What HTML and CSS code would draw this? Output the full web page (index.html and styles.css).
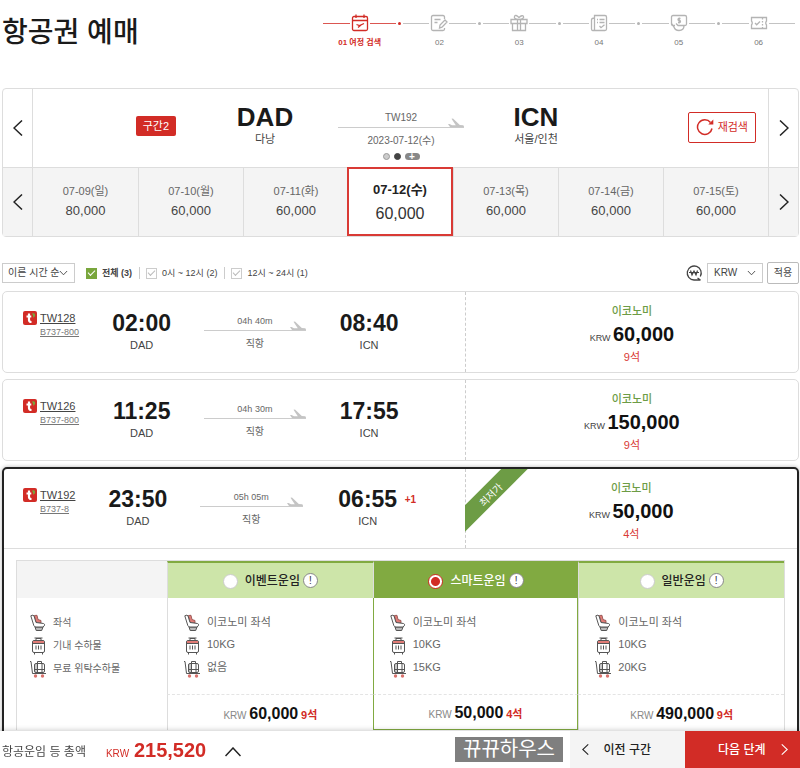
FILE: index.html
```html
<!DOCTYPE html>
<html lang="ko">

<head>
    <meta charset="UTF-8">
    <meta name="viewport" content="width=device-width, initial-scale=1.0">
    <title>항공권 예매</title>
    <link rel="stylesheet" href="styles.css">
</head>

<body>
    <!-- shared icons -->
    <svg class="sprite" aria-hidden="true">
        <symbol id="left" viewBox="0 0 10 16"><path d="M9 .5 1 8l8 7.500" fill="none" stroke="currentColor" stroke-width="1.500"/></symbol>
        <symbol id="right" viewBox="0 0 10 16"><path d="M1 .5 9 8l-8 7.500" fill="none" stroke="currentColor" stroke-width="1.500"/></symbol>
        <symbol id="up" viewBox="0 0 16 10"><path d="M.5 9 8 1l7.500 8" fill="none" stroke="currentColor" stroke-width="1.500"/></symbol>
        <symbol id="down" viewBox="0 0 10 6"><path d="M1 .8 5 5l4-4.200" fill="none" stroke="currentColor"/></symbol>
        <symbol id="plane" viewBox="0 0 16 10"><path d="M0 6h1.500L4 7.200h3.800L3.500.8 5 .6l6.800 6.300 3.200.3q1 .3 1 1.200 0 .8-1 .8H3.200Q2 9.200 1.300 8Z" fill="#c4c4c4"/></symbol>
        <symbol id="tway" viewBox="0 0 14 14">
            <rect width="14" height="14" rx="2" fill="#d22c26"/>
            <path d="M6 2.500v6.500q0 2 2.500 2M3.500 5.500h4.800" fill="none" stroke="#fff" stroke-width="2.200"/>
            <path d="M9 2.500q3.200-.8 3.200 1.500 0 2-2.200 2.800.5-2.200-1-4.300Z" fill="#79a63c"/>
        </symbol>
        <symbol id="seat" viewBox="0 0 16 18">
            <path d="M4.300 1.500 7 1.300 8 5.500l3 1V9L6 8.300Z" fill="#e07b76" stroke="#8a4a47" stroke-width=".8"/>
            <path d="M5 13l1.200 3.500h5.500L13 13Z" fill="#bbb" stroke="#555"/>
            <path d="M.8 1.800Q3.500.3 4 2l2 6.500 7.500 1q1.700.5.8 2.300L13 13H6q-1.700 0-2.200-1.500Z" fill="#fff" stroke="#555"/>
        </symbol>
        <symbol id="cabin" viewBox="0 0 16 18">
            <rect x="2.500" y="3.500" width="12" height="12" rx="1.500" fill="#fff" stroke="#555"/>
            <path d="M3 4h11v2H3Z" fill="#e07b76"/>
            <path d="M6 3.500v-2h5v2M4.500 1h8M2.500 6.500h12M6 8.500v4M8.500 8.500v4M11 8.500v4M4.500 15.500v2M12.500 15.500v2" fill="none" stroke="#555"/>
        </symbol>
        <symbol id="trolley" viewBox="0 0 16 18">
            <path d="M4.500 4h3v9h-3Z" fill="#c8c8c8"/>
            <rect x="4.500" y="3.500" width="10" height="9" rx="1.500" fill="none" stroke="#555"/>
            <path d="M0 1.500h1l1.500 12H16M7.500 3.500v-2h4v2M7.500 3.500v9M12 3.500v9M4.500 9.500h10" fill="none" stroke="#555"/>
            <circle cx="5.500" cy="16" r="1.700" fill="#d9736e"/><circle cx="12.500" cy="16" r="1.700" fill="#d9736e"/>
        </symbol>
    </svg>

    <header class="page-header">
        <h1>항공권 예매</h1>
        <ol class="steps">
            <li class="active">
                <div class="track">
                    <svg viewBox="0 0 18 18"><rect x="1.500" y="2.500" width="15" height="14" rx="1.500"/><path d="M1.500 6.500h15M5 .5v3.500M13 .5v3.500M5.500 10.500l3 1 4.500-2M7 13.500l3-2.500"/></svg>
                </div>
                <span>01 여정 검색</span>
            </li>
            <li>
                <div class="track">
                    <svg viewBox="0 0 18 18"><path d="M14.500 5V3q0-1.500-1.500-1.500H3Q1.500 1.500 1.500 3v12q0 1.500 1.500 1.500h10q1.500 0 1.500-1.500v-1M4.500 5.500h6M4.500 8.500h3M9.500 14l.5-3 5-5 2 2-5 5.200Z"/></svg>
                </div>
                <span>02</span>
            </li>
            <li>
                <div class="track">
                    <svg viewBox="0 0 18 18"><path d="M1 5.500h16v4H1ZM2.500 9.500v7h13v-7M7.500 5.500v11M10.500 5.500v11M9 5.500Q3.500 5 4.500 2.500T9 3.500Q12.500.5 13.500 2.500T9 5.500"/></svg>
                </div>
                <span>03</span>
            </li>
            <li>
                <div class="track">
                    <svg viewBox="0 0 18 18"><path d="M4.500 16.500v-15h10.500q1.500 0 1.500 1.500v12q0 1.500-1.500 1.500H2.500q-1 0-1-1.500V6q0-2 3-2M7 5.500h1M9.500 5.500h5M7 8.500h1M9.500 8.500h5M9.500 12l1.500 1.700 3.500-3"/></svg>
                </div>
                <span>04</span>
            </li>
            <li>
                <div class="track">
                    <svg viewBox="0 0 18 18"><path d="M5 11.500H3Q1.500 11.500 1.500 10V3Q1.500 1.500 3 1.500h12q1.500 0 1.500 1.500v7q0 1.500-1.500 1.500h-1M1.500 9.500 4 13q1 3.500 5 3.500 5 0 5-5H8L6 9.500M10.500 4.500H9q-1 0-1 1t1 1h.5q1 0 1 1t-1 1H8M9.200 3.500v6"/></svg>
                </div>
                <span>05</span>
            </li>
            <li>
                <div class="track">
                    <svg viewBox="0 0 18 18"><path d="M1.500 3.500h15v3.500q-1.500 2 0 4v3.500h-15V11q1.500-2 0-4ZM5 9l1.700 1.800L10 7.500"/><path d="M12.500 4v10" stroke-dasharray="1.500 1.500"/></svg>
                </div>
                <span>06</span>
            </li>
        </ol>
    </header>

    <main>
        <section class="trip">
            <div class="trip-row">
                <button class="nav" type="button" aria-label="이전 구간"><svg><use href="#left"/></svg></button>
                <div class="summary">
                    <span class="badge">구간2</span>
                    <div class="airport"><strong>DAD</strong><span>다낭</span></div>
                    <div class="leg">
                        <span>TW192</span>
                        <div class="line"><svg><use href="#plane"/></svg></div>
                        <span>2023-07-12(수)</span>
                        <div class="dots"><i></i><i class="on"></i><i class="plus">+</i></div>
                    </div>
                    <div class="airport"><strong>ICN</strong><span>서울/인천</span></div>
                    <button class="research" type="button">
                        <svg viewBox="0 0 18 18"><path d="M16 10.500A7.300 7.300 0 1 1 14.500 4.500" fill="none" stroke="#d22c26" stroke-width="1.500"/><path d="M17.300 1.500v5h-5Z" fill="#d22c26"/></svg>
                        재검색
                    </button>
                </div>
                <button class="nav" type="button" aria-label="다음 구간"><svg><use href="#right"/></svg></button>
            </div>
            <div class="trip-row dates">
                <button class="nav" type="button" aria-label="이전 날짜"><svg><use href="#left"/></svg></button>
                <div class="days">
                    <button class="day" type="button"><span>07-09(일)</span><b>80,000</b></button>
                    <button class="day" type="button"><span>07-10(월)</span><b>60,000</b></button>
                    <button class="day" type="button"><span>07-11(화)</span><b>60,000</b></button>
                    <button class="day selected" type="button"><span>07-12(수)</span><b>60,000</b></button>
                    <button class="day" type="button"><span>07-13(목)</span><b>60,000</b></button>
                    <button class="day" type="button"><span>07-14(금)</span><b>60,000</b></button>
                    <button class="day" type="button"><span>07-15(토)</span><b>60,000</b></button>
                </div>
                <button class="nav" type="button" aria-label="다음 날짜"><svg><use href="#right"/></svg></button>
            </div>
        </section>

        <form class="filters">
            <div class="select sort">
                <select aria-label="정렬"><option>이른 시간 순</option></select>
                <svg><use href="#down"/></svg>
            </div>
            <div class="checks">
                <label class="all"><input type="checkbox" checked>전체 (3)</label>
                <label><input type="checkbox">0시 ~ 12시 (2)</label>
                <label><input type="checkbox">12시 ~ 24시 (1)</label>
            </div>
            <div class="currency">
                <svg class="won" viewBox="0 0 18 18"><path d="M15.300 12.500A7 7 0 1 0 9 16h6.500M12.500 14l3 2" fill="none" stroke="#444" stroke-width="1.300"/><path d="M5.500 6.500 7 11l2-4 2 4 1.500-4.500M4 8.500h10" fill="none" stroke="#444" stroke-width="1.200"/></svg>
                <div class="select">
                    <select aria-label="통화"><option>KRW</option></select>
                    <svg><use href="#down"/></svg>
                </div>
                <button class="apply" type="button">적용</button>
            </div>
        </form>

        <article class="flight">
            <div class="flight-row">
                <div class="schedule">
                    <div class="number">
                        <svg><use href="#tway"/></svg>
                        <div><a href="#">TW128</a><a class="craft" href="#">B737-800</a></div>
                    </div>
                    <div class="time"><strong>02:00</strong><span>DAD</span></div>
                    <div class="leg">
                        <span>04h 40m</span>
                        <div class="line"><svg><use href="#plane"/></svg></div>
                        <span class="direct">직항</span>
                    </div>
                    <div class="time"><strong>08:40</strong><span>ICN</span></div>
                </div>
                <div class="price">
                    <span class="cabin">이코노미</span>
                    <div>KRW <strong>60,000</strong></div>
                    <span class="seats">9석</span>
                </div>
            </div>
        </article>

        <article class="flight">
            <div class="flight-row">
                <div class="schedule">
                    <div class="number">
                        <svg><use href="#tway"/></svg>
                        <div><a href="#">TW126</a><a class="craft" href="#">B737-800</a></div>
                    </div>
                    <div class="time"><strong>11:25</strong><span>DAD</span></div>
                    <div class="leg">
                        <span>04h 30m</span>
                        <div class="line"><svg><use href="#plane"/></svg></div>
                        <span class="direct">직항</span>
                    </div>
                    <div class="time"><strong>17:55</strong><span>ICN</span></div>
                </div>
                <div class="price">
                    <span class="cabin">이코노미</span>
                    <div>KRW <strong>150,000</strong></div>
                    <span class="seats">9석</span>
                </div>
            </div>
        </article>

        <article class="flight open">
            <div class="flight-row">
                <div class="schedule">
                    <div class="number">
                        <svg><use href="#tway"/></svg>
                        <div><a href="#">TW192</a><a class="craft" href="#">B737-8</a></div>
                    </div>
                    <div class="time"><strong>23:50</strong><span>DAD</span></div>
                    <div class="leg">
                        <span>05h 05m</span>
                        <div class="line"><svg><use href="#plane"/></svg></div>
                        <span class="direct">직항</span>
                    </div>
                    <div class="time"><strong>06:55<sup>+1</sup></strong><span>ICN</span></div>
                </div>
                <div class="price">
                    <div class="ribbon"><span>최저가</span></div>
                    <span class="cabin">이코노미</span>
                    <div>KRW <strong>50,000</strong></div>
                    <span class="seats">4석</span>
                </div>
            </div>

            <table class="fares">
                <thead>
                    <tr>
                        <td></td>
                        <th><label><input type="radio" name="fare">이벤트운임</label><button class="info" type="button" aria-label="이벤트운임 안내">!</button></th>
                        <th class="picked"><label><input type="radio" name="fare" checked>스마트운임</label><button class="info" type="button" aria-label="스마트운임 안내">!</button></th>
                        <th><label><input type="radio" name="fare">일반운임</label><button class="info" type="button" aria-label="일반운임 안내">!</button></th>
                    </tr>
                </thead>
                <tbody>
                    <tr class="first">
                        <th><svg><use href="#seat"/></svg>좌석</th>
                        <td><svg><use href="#seat"/></svg>이코노미 좌석</td>
                        <td class="picked"><svg><use href="#seat"/></svg>이코노미 좌석</td>
                        <td><svg><use href="#seat"/></svg>이코노미 좌석</td>
                    </tr>
                    <tr>
                        <th><svg><use href="#cabin"/></svg>기내 수하물</th>
                        <td><svg><use href="#cabin"/></svg>10KG</td>
                        <td class="picked"><svg><use href="#cabin"/></svg>10KG</td>
                        <td><svg><use href="#cabin"/></svg>10KG</td>
                    </tr>
                    <tr class="last">
                        <th><svg><use href="#trolley"/></svg>무료 위탁수하물</th>
                        <td><svg><use href="#trolley"/></svg>없음</td>
                        <td class="picked"><svg><use href="#trolley"/></svg>15KG</td>
                        <td><svg><use href="#trolley"/></svg>20KG</td>
                    </tr>
                </tbody>
                <tfoot>
                    <tr>
                        <td></td>
                        <td>KRW <strong>60,000</strong> <em>9석</em></td>
                        <td class="picked">KRW <strong>50,000</strong> <em>4석</em></td>
                        <td>KRW <strong>490,000</strong> <em>9석</em></td>
                    </tr>
                </tfoot>
            </table>
        </article>
    </main>

    <footer class="total-bar">
        <span class="total-label">항공운임 등 총액</span>
        <span class="total">KRW <strong>215,520</strong></span>
        <button class="toggle" type="button" aria-label="상세 보기"><svg><use href="#up"/></svg></button>
        <span class="mark">뀨뀨하우스</span>
        <button class="prev" type="button"><svg><use href="#left"/></svg>이전 구간</button>
        <button class="next" type="button">다음 단계<svg><use href="#right"/></svg></button>
    </footer>
</body>

</html>
```

FILE: styles.css
```css
* {
    box-sizing: border-box;
}

body {
    margin: 0;
    font-family: "Liberation Sans", "Noto Sans CJK KR", sans-serif;
    font-size: 11px;
    line-height: 16px;
    color: #444;
    background-color: #fff;
}

button,
select,
input {
    margin: 0;
    padding: 0;
    font: inherit;
    color: inherit;
    border: none;
    background: none;
}

button {
    cursor: pointer;
}

.sprite {
    display: none;
}

/* header */
.page-header {
    display: flex;
    justify-content: space-between;
    height: 88px;
    padding-left: 2px;
}

h1 {
    margin: 10px 0 0;
    font-family: "Noto Sans CJK KR", sans-serif;
    font-size: 28px;
    font-weight: 500;
    line-height: 40px;
    color: #1a1a1a;
}

.steps {
    display: grid;
    grid-template-columns: repeat(6, 1fr);
    width: 60%;
    margin: 14px 0 0;
    padding: 0;
    list-style: none;
    font-size: 8px;
    text-align: center;
    color: #777;
}

.track {
    display: flex;
    align-items: center;
    gap: 1px;
    height: 18px;
    margin-bottom: 3px;
    color: #b4b4b4;
}

.track::before,
.track::after {
    content: "";
    flex: 1;
    height: 1px;
    background-color: currentColor;
    opacity: 0.8;
}

.track svg {
    width: 18px;
    height: 18px;
    fill: none;
    stroke: currentColor;
    stroke-width: 1.3;
}

.steps li {
    position: relative;
    padding: 0 5px 0 2px;
}

.steps li:not(:last-child)::after {
    content: "";
    position: absolute;
    top: 8px;
    right: 0;
    width: 3px;
    height: 3px;
    border-radius: 50%;
    background-color: #b4b4b4;
}

.steps .active,
.steps .active .track {
    color: #d22c26;
}

.steps .active {
    font-weight: bold;
}

.steps li.active:not(:last-child)::after {
    background-color: #d22c26;
}

/* trip and dates */
main {
    padding: 0 1px 20px 2px;
}

.trip {
    border: 1px solid #ddd;
    border-radius: 4px;
}

.trip-row {
    display: flex;
    height: 78px;
}

.dates {
    height: 69px;
    border-top: 1px solid #ddd;
    background-color: #f4f4f4;
}

.nav {
    width: 30px;
    color: #222;
    border-right: 1px solid #ddd;
}

.nav:last-child {
    border-right: none;
    border-left: 1px solid #ddd;
}

.nav svg {
    display: block;
    width: 10px;
    height: 16px;
    margin: auto;
}

.summary {
    flex: 1;
    display: grid;
    grid-template-columns: 143fr 162fr 126fr 144fr 148fr;
    align-items: center;
    padding: 0 12px 2px 0;
}

.badge {
    justify-self: end;
    margin-bottom: 2px;
    padding: 2px 7px;
    border-radius: 2px;
    color: #fff;
    background-color: #d22c26;
}

.airport {
    padding-bottom: 4px;
    text-align: center;
}

.badge + .airport {
    padding-left: 16px;
}

.airport strong,
.airport span {
    display: block;
}

.airport strong {
    font-size: 26px;
    line-height: 28px;
    color: #1a1a1a;
}

.leg {
    font-size: 10px;
    text-align: center;
    color: #666;
}

.leg span {
    display: block;
}

.line {
    display: flex;
    justify-content: flex-end;
    height: 2px;
    border-bottom: 1px solid #ccc;
}

.line svg {
    flex: none;
    width: 16px;
    height: 10px;
    margin-top: -8px;
}

.summary .line {
    margin-bottom: 5px;
}

.summary .leg {
    padding-top: 20px;
}

.dots {
    display: flex;
    justify-content: center;
    align-items: center;
    gap: 4px;
    height: 16px;
}

.dots i {
    width: 7px;
    height: 7px;
    border: 1px solid #999;
    border-radius: 50%;
    background-color: #ccc;
}

.dots .on {
    border-color: #444;
    background-color: #444;
}

.dots .plus {
    width: 15px;
    border: none;
    border-radius: 4px;
    font-style: normal;
    font-weight: bold;
    line-height: 7px;
    color: #fff;
    background-color: #888;
}

.research {
    display: flex;
    justify-self: end;
    align-items: center;
    gap: 4px;
    height: 31px;
    padding: 0 7px;
    border: 1px solid #d22c26;
    border-radius: 2px;
    color: #d22c26;
}

.research svg {
    width: 18px;
    height: 18px;
}

.days {
    flex: 1;
    display: grid;
    grid-template-columns: repeat(7, 1fr);
}

.day {
    padding-bottom: 3px;
}

.day + .day {
    border-left: 1px solid #ddd;
}

.day span,
.day b {
    display: block;
    line-height: 20px;
}

.day span {
    color: #666;
}

.day b {
    font-size: 13px;
    font-weight: normal;
}

.day.selected {
    margin: -1px 0 0 -1px;
    padding-bottom: 0;
    border: 2px solid #d93a35;
    background-color: #fff;
    color: #333;
}

.day.selected span {
    font-size: 13px;
    line-height: 24px;
    font-weight: bold;
    color: #222;
}

.day.selected b {
    font-size: 16px;
    line-height: 24px;
}

/* filters */
.filters {
    display: flex;
    align-items: center;
    height: 22px;
    margin: 25px 0 7px;
    font-size: 10px;
}

.select {
    position: relative;
}

.select select {
    width: 56px;
    height: 20px;
    padding-left: 6px;
    border: 1px solid #ccc;
    appearance: none;
}

.select.sort select {
    width: 73px;
    padding-left: 5px;
}

.select svg {
    position: absolute;
    top: 7px;
    right: 7px;
    width: 9px;
    height: 6px;
    pointer-events: none;
}

.checks {
    display: flex;
    margin-left: 11px;
    font-size: 9px;
    line-height: 12px;
}

.checks label {
    display: flex;
    align-items: center;
    gap: 5px;
}

.checks label + label {
    margin-left: 7px;
    padding-left: 6px;
    border-left: 1px solid #ccc;
}

.checks .all {
    font-weight: bold;
}

.checks input {
    display: grid;
    place-items: center;
    width: 11px;
    height: 11px;
    border: 1px solid #ccc;
    appearance: none;
}

.checks input::after {
    content: "";
    width: 6px;
    height: 3px;
    margin-top: -2px;
    border: solid #bbb;
    border-width: 0 0 1px 1px;
    transform: rotate(-45deg);
}

.checks input:checked {
    border-color: #79a63c;
    background-color: #79a63c;
}

.checks input:checked::after {
    border-color: #fff;
}

.currency {
    display: flex;
    align-items: center;
    gap: 4px;
    margin-left: auto;
}

.won {
    width: 18px;
    height: 18px;
}

.apply {
    width: 32px;
    height: 22px;
    border: 1px solid #bbb;
    border-radius: 2px;
}

/* flights */
.flight {
    margin-bottom: 6px;
    border: 1px solid #ddd;
    border-radius: 5px;
}

.flight-row {
    display: grid;
    grid-template-columns: 463fr 334fr;
    height: 80px;
}

.schedule {
    display: grid;
    grid-template-columns: 84fr 70fr 27fr 103fr 26fr 74fr 59fr;
    align-items: center;
    padding-left: 20px;
}

.schedule .leg {
    grid-column: 4;
    font-size: 9px;
}

.schedule .leg .direct {
    margin-top: 5px;
    font-size: 10px;
}

.time {
    padding-bottom: 2px;
    text-align: center;
}

.leg + .time {
    grid-column: 6;
}

.time strong,
.time span {
    display: block;
}

.time strong {
    position: relative;
    font-size: 23px;
    line-height: 27px;
    color: #1a1a1a;
}

.time sup {
    position: absolute;
    left: 100%;
    font-size: 10px;
    color: #d22c26;
}

.number {
    display: flex;
    gap: 3px;
    align-self: start;
    margin-top: 19px;
}

.number svg {
    width: 14px;
    height: 14px;
}

.number a {
    display: block;
    line-height: 14px;
    color: #444;
}

.number .craft {
    font-size: 9px;
    color: #777;
}

.price {
    display: flex;
    flex-direction: column;
    align-items: center;
    padding-top: 10px;
    border-left: 1px dashed #ccc;
    font-size: 9px;
    color: #444;
}

.price > span {
    font-size: 11px;
    line-height: 18px;
}

.price > div {
    height: 28px;
    line-height: 28px;
}

.price strong {
    font-size: 20px;
    color: #111;
}

.price .cabin {
    font-weight: 500;
    color: #6d9c45;
}

.price .seats {
    color: #d93a35;
}

.flight.open {
    border: 2px solid #222;
    box-shadow: 0 0 4px rgba(0, 0, 0, 0.3);
}

.open .flight-row {
    border-bottom: 1px solid #ddd;
}

.open .schedule {
    grid-template-columns: 80fr 70fr 27fr 103fr 28fr 74fr 60fr;
    padding-left: 19px;
}

.open .price {
    position: relative;
}

.price .ribbon {
    position: absolute;
    top: 0;
    left: -1px;
    width: 63px;
    height: 63px;
    background-color: #6d9c45;
    clip-path: polygon(58% 0, 100% 0, 0 100%, 0 58%);
    font-size: 10px;
    text-align: center;
    line-height: 54px;
}

.ribbon span {
    display: block;
    width: 50px;
    height: 50px;
    color: #fff;
    transform: rotate(-45deg);
}

/* fare table */
.fares {
    width: calc(100% - 24px);
    margin: 11px 12px 12px;
    border-collapse: separate;
    border-spacing: 0;
    table-layout: fixed;
    border: solid #ddd;
    border-width: 1px 1px 0;
    color: #666;
}

.fares th,
.fares td {
    padding: 0 0 0 16px;
    border-left: 1px solid #ddd;
    font-weight: normal;
    text-align: left;
}

.fares th:first-child,
.fares td:first-child {
    width: 150px;
    padding-left: 13px;
    border-left: none;
    font-size: 10px;
}

.fares thead td {
    background-color: #f4f4f4;
}

.fares thead th {
    height: 37px;
    padding: 0;
    border-top: 2px solid #81aa41;
    font-size: 12px;
    font-weight: 500;
    text-align: center;
    color: #222;
    background-color: #cde5a9;
}

.fares thead .picked {
    color: #fff;
    background-color: #81aa41;
}

.fares label,
.info,
.fares input {
    display: inline-block;
    vertical-align: middle;
}

.fares input {
    width: 15px;
    height: 15px;
    margin-right: 7px;
    border: 1px solid #ccc;
    border-radius: 50%;
    background-color: #fff;
    appearance: none;
}

.fares input:checked {
    border: 1px solid #d22c26;
    background: radial-gradient(#d22c26 4px, #fff 5px);
}

.info {
    width: 15px;
    height: 15px;
    margin-left: 3px;
    border: 1px solid #888;
    border-radius: 50%;
    font-size: 10px;
    line-height: 13px;
    color: #333;
    background-color: #fff;
}

.fares tbody th,
.fares tbody td {
    height: 23px;
}

.fares tbody svg {
    width: 16px;
    height: 18px;
    margin-right: 7px;
    vertical-align: middle;
}

.fares tbody .first > * {
    height: 36px;
    padding-top: 14px;
}

.fares tbody .last > * {
    height: 37px;
    padding-bottom: 14px;
}

.fares tfoot td {
    height: 36px;
    padding: 4px 0 0;
    font-size: 10px;
    text-align: center;
    color: #888;
}

.fares tfoot td + td {
    border-top: 1px dashed #e4e4e4;
}

.fares tbody .picked,
.fares tfoot .picked {
    border-left: 1px solid #81aa41;
    border-right: 1px solid #81aa41;
}

.fares tfoot .picked {
    border-bottom: 1px solid #81aa41;
}

.fares strong {
    font-size: 16px;
    color: #111;
}

.fares em {
    font-size: 11px;
    font-style: normal;
    font-weight: bold;
    color: #d22c26;
}

/* bottom bar */
.total-bar {
    position: fixed;
    bottom: 0;
    left: 0;
    right: 0;
    display: flex;
    align-items: center;
    height: 37px;
    padding-left: 2px;
    font-size: 12px;
    background-color: #fff;
    box-shadow: 0 -1px 5px rgba(0, 0, 0, 0.2);
}

.total-label,
.total,
.toggle {
    padding-top: 4px;
}

.total {
    margin-left: 20px;
    font-size: 10px;
    color: #d22c26;
}

.total strong {
    margin-left: 2px;
    font-size: 20px;
}

.toggle {
    margin-left: 19px;
    color: #222;
}

.toggle svg {
    display: block;
    width: 16px;
    height: 10px;
}

.mark {
    margin: 0 7px 0 auto;
    padding: 0 8px;
    font-size: 20px;
    line-height: 25px;
    color: #fff;
    background-color: #7f7f7f;
}

.prev,
.next {
    display: flex;
    justify-content: space-between;
    align-items: center;
    width: 115px;
    height: 100%;
    font-weight: 500;
}

.prev {
    padding: 0 34px 0 12px;
    color: #222;
    background-color: #f4f4f4;
}

.next {
    padding: 0 12px 0 33px;
    color: #fff;
    background-color: #d22c26;
}

.prev svg,
.next svg {
    width: 7px;
    height: 11px;
}
```
